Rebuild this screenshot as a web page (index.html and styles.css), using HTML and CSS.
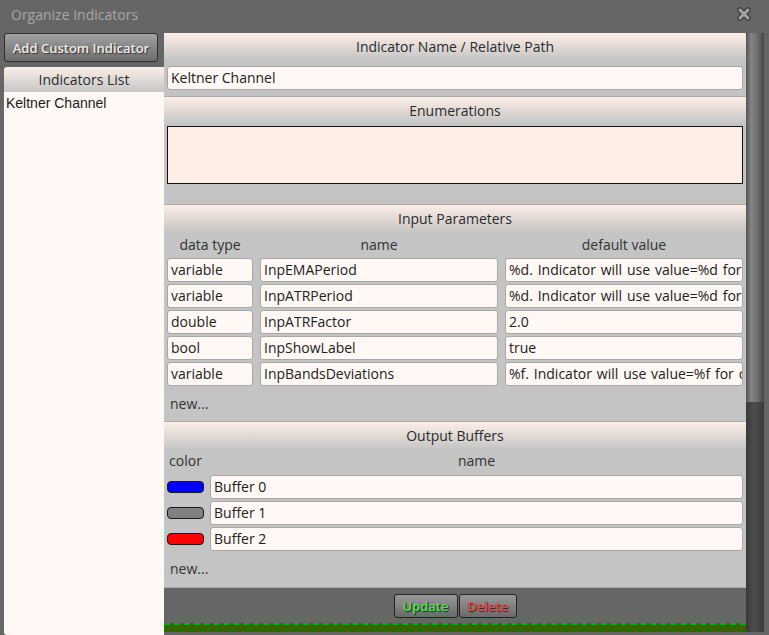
FILE: index.html
```html
<!DOCTYPE html>
<html lang="en">
<head>
    <meta charset="UTF-8">
    <meta name="viewport" content="width=device-width, initial-scale=1.0">
    <title>Organize Indicators</title>
    <link rel="stylesheet" href="styles.css">
</head>
<body>
    <div class="titlebar">
        <span class="title">Organize Indicators</span>
        <svg class="close" width="18" height="18" viewBox="0 0 18 18">
            <path d="M5 5 L13 13 M13 5 L5 13" stroke="#3c3c3c" stroke-width="5.5" stroke-linecap="round"/>
            <path d="M5 5 L13 13 M13 5 L5 13" stroke="#a4a4a4" stroke-width="3" stroke-linecap="round"/>
        </svg>
    </div>

    <div class="main">
        <div class="sidebar">
            <button class="btn-add">Add Custom Indicator</button>
            <div class="list-head">Indicators List</div>
            <div class="list">
                <div class="list-item">Keltner Channel</div>
            </div>
        </div>

        <div class="content">
            <div class="section">
                <div class="section-head">Indicator Name / Relative Path</div>
                <div class="section-body name-body">
                    <div class="field">Keltner Channel</div>
                </div>
            </div>

            <div class="section">
                <div class="section-head">Enumerations</div>
                <div class="section-body enum-body">
                    <div class="enum-box"></div>
                </div>
            </div>

            <div class="section">
                <div class="section-head">Input Parameters</div>
                <div class="section-body">
                    <div class="params">
                        <div class="col-label">data type</div>
                        <div class="col-label">name</div>
                        <div class="col-label">default value</div>

                        <div class="field">variable</div>
                        <div class="field">InpEMAPeriod</div>
                        <div class="field wide">%d. Indicator will use value=%d for</div>

                        <div class="field">variable</div>
                        <div class="field">InpATRPeriod</div>
                        <div class="field wide">%d. Indicator will use value=%d for</div>

                        <div class="field">double</div>
                        <div class="field">InpATRFactor</div>
                        <div class="field">2.0</div>

                        <div class="field">bool</div>
                        <div class="field">InpShowLabel</div>
                        <div class="field">true</div>

                        <div class="field">variable</div>
                        <div class="field">InpBandsDeviations</div>
                        <div class="field wide">%f. Indicator will use value=%f for c</div>
                    </div>
                    <div class="new-link short">new...</div>
                </div>
            </div>

            <div class="section">
                <div class="section-head">Output Buffers</div>
                <div class="section-body">
                    <div class="buffers">
                        <div class="col-label">color</div>
                        <div class="col-label">name</div>

                        <div class="swatch-cell"><span class="swatch blue"></span></div>
                        <div class="field">Buffer 0</div>

                        <div class="swatch-cell"><span class="swatch gray"></span></div>
                        <div class="field">Buffer 1</div>

                        <div class="swatch-cell"><span class="swatch red"></span></div>
                        <div class="field">Buffer 2</div>
                    </div>
                    <div class="new-link">new...</div>
                </div>
            </div>

            <div class="footer">
                <button class="btn-action update">Update</button>
                <button class="btn-action delete">Delete</button>
            </div>
            <div class="status"></div>
        </div>

        <div class="scrollbar">
            <div class="thumb"></div>
        </div>
    </div>
</body>
</html>
```

FILE: styles.css
```css
body {
    margin: 0;
    background: #666666;
    font-family: "Open Sans", "Noto Sans", sans-serif;
    font-size: 14px;
    color: #2b2b2b;
    overflow: hidden;
    height: 635px;
}
.titlebar {
    height: 30px;
    display: flex;
    align-items: center;
    justify-content: space-between;
    padding: 0 16px 0 11px;
}
.title {
    color: #a6a6a6;
    font-size: 14px;
    margin-top: -1px;
}
.close {
    margin-top: -2px;
}
.main {
    display: flex;
    margin-top: 3px;
    padding-left: 4px;
    height: 602px;
}
.sidebar {
    width: 160px;
    display: flex;
    flex-direction: column;
}
.btn-add {
    width: 154px;
    height: 29px;
    padding: 0;
    border: 1px solid #2e2e2e;
    border-radius: 3px;
    background: linear-gradient(#a2a2a2, #6c6c6c);
    color: #ececec;
    font-family: "Open Sans", sans-serif;
    font-weight: 600;
    font-size: 13px;
    text-shadow: 1px 1px 1px #333;
}
.list-head {
    margin-top: 5px;
    height: 25px;
    line-height: 26px;
    text-align: center;
    background: linear-gradient(#fbefe9, #c6c6c6);
    border-top-left-radius: 3px;
}
.list {
    flex: 1;
    background: #fff8f4;
    border-bottom-left-radius: 3px;
}
.list-item {
    padding: 3px 2px;
    font-family: "Liberation Sans", Arial, sans-serif;
    color: #1b1b24;
}
.content {
    width: 582px;
    height: 599px;
    overflow: hidden;
    display: flex;
    flex-direction: column;
}
.section {
    flex-shrink: 0;
    background: #c4c4c4;
    border-bottom: 1px solid #a9a9a9;
}
.section-head {
    height: 27px;
    line-height: 27px;
    text-align: center;
    background: linear-gradient(#fdeee7, #c5c5c5);
}
.section-body {
    padding: 3px 3px 0 3px;
}
.name-body {
    padding: 6px 3px 6px 3px;
}
.enum-body {
    padding: 2px 3px 20px 3px;
}
.enum-box {
    height: 56px;
    background: #feeee6;
    border: 1px solid #111;
}
.field {
    height: 22px;
    line-height: 22px;
    padding: 0 3px;
    background: #fff8f4;
    border: 1px solid #a8a8a8;
    border-radius: 3px;
    white-space: nowrap;
    overflow: hidden;
    color: #222;
}
.wide {
    word-spacing: 1.2px;
}
.params {
    display: grid;
    grid-template-columns: 86px 1fr 1fr;
    column-gap: 7px;
    row-gap: 2px;
}
.col-label {
    text-align: center;
    height: 20px;
    line-height: 20px;
    margin-bottom: 1px;
    color: #333;
}
.buffers {
    display: grid;
    grid-template-columns: 37px 1fr;
    column-gap: 6px;
    row-gap: 2px;
}
.buffers .col-label {
    line-height: 18px;
}
.new-link {
    height: 36px;
    line-height: 36px;
    padding-left: 3px;
    color: #333;
}
.new-link.short {
    height: 35px;
}
.swatch-cell {
    display: flex;
    align-items: center;
}
.swatch {
    width: 35px;
    height: 10px;
    border: 1px solid #1a1a1a;
    border-radius: 4px;
}
.blue { background: #0000ff; }
.gray { background: #808080; }
.red { background: #ff0000; }
.footer {
    flex-shrink: 0;
    height: 35px;
    background: #666666;
    display: flex;
    justify-content: center;
    align-items: center;
    gap: 1px;
}
.btn-action {
    height: 24px;
    padding: 0 6px;
    border: 1px solid #242424;
    border-radius: 3px;
    background: linear-gradient(#999999, #6a6a6a);
    font-family: "Open Sans", sans-serif;
    font-weight: 600;
    font-size: 13px;
    text-shadow: 1px 1px 1px #222;
}
.update { color: #4be34b; width: 64px; }
.delete { color: #ef4b4b; width: 58px; }
.status {
    flex: 0 0 20px;
    background: #336600;
    border-top: 2px dashed #00b400;
}
.scrollbar {
    width: 18px;
    height: 599px;
    background: linear-gradient(to right, #3a3a3a, #4c4c4c 40%, #474747 70%, #3a3a3a);
}
.thumb {
    height: 369px;
    border-radius: 3px 3px 0 0;
    background: linear-gradient(to right, #555555, #858585 30%, #6c6c6c 65%, #484848);
}
```
